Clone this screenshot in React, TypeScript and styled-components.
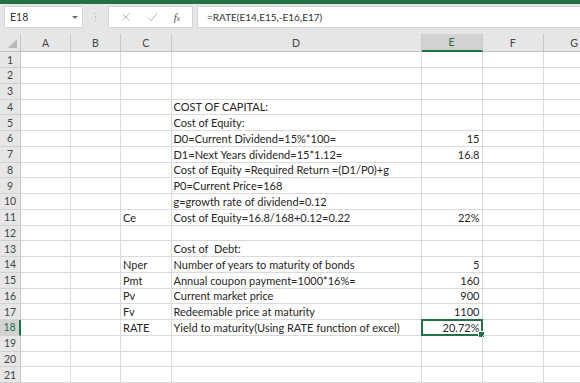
import styled, { createGlobalStyle, css } from 'styled-components';

const GlobalStyle = createGlobalStyle`
  html, body {
    margin: 0;
    padding: 0;
    width: 580px;
    height: 383px;
    overflow: hidden;
    background: #ffffff;
  }
  body {
    font-family: Lato, "Liberation Sans", sans-serif;
  }
`;

const COLS = '21px 50px 50px 50.5px 250px 61px 61.5px 61px';
const ROW_H = 15.75;

const Window = styled.div`
  display: flex;
  flex-direction: column;
  width: 580px;
  height: 383px;
  overflow: hidden;
`;

const TitleStrip = styled.div`
  height: 5px;
  background: #217346;
`;

const FormulaBar = styled.div`
  display: flex;
  align-items: center;
  height: 35px;
  padding: 0 0 0 4px;
  background: #e6e6e6;
  box-sizing: border-box;
`;

const NameBox = styled.div`
  display: flex;
  align-items: center;
  justify-content: space-between;
  width: 79px;
  height: 22px;
  box-sizing: border-box;
  background: #ffffff;
  border: 1px solid #d6d6d6;
  padding: 0 4px 0 5px;
  font-size: 10.5px;
  color: #333;
`;

const Caret = styled.span`
  width: 0;
  height: 0;
  border-left: 3px solid transparent;
  border-right: 3px solid transparent;
  border-top: 3px solid #6a6a6a;
`;

const Grip = styled.div`
  display: flex;
  flex-direction: column;
  gap: 2px;
  width: 25px;
  align-items: center;
  span {
    width: 1.5px;
    height: 1.5px;
    background: #b4b4b4;
  }
`;

const FxBox = styled.div`
  display: flex;
  align-items: center;
  justify-content: space-around;
  width: 85px;
  height: 22px;
  box-sizing: border-box;
  background: #ffffff;
  border: 1px solid #d6d6d6;
  padding: 0 4px;
  margin-right: 4px;
`;

const FxLabel = styled.span`
  font-family: "Liberation Serif", serif;
  font-style: italic;
  font-size: 11px;
  color: #555;
  sub {
    font-size: 7.5px;
    vertical-align: baseline;
  }
`;

const FormulaInput = styled.div`
  flex: 1;
  display: flex;
  align-items: center;
  height: 22px;
  box-sizing: border-box;
  background: #ffffff;
  border: 1px solid #d6d6d6;
  border-right: none;
  padding-left: 9px;
  font-size: 10px;
  color: #333;
`;

const Gap = styled.div`
  height: 5px;
  background: #e6e6e6;
`;

const Sheet = styled.div`
  display: grid;
  grid-template-columns: ${COLS};
  grid-template-rows: 18px repeat(21, ${ROW_H}px);
  font-size: 11px;
  color: #262626;
`;

const Corner = styled.div`
  background: #e6e6e6;
  border-right: 1px solid #c8c8c8;
  border-bottom: 1px solid #c0c0c0;
  box-sizing: border-box;
  position: relative;
  &::after {
    content: '';
    position: absolute;
    right: 3px;
    bottom: 3px;
    width: 0;
    height: 0;
    border-left: 9px solid transparent;
    border-bottom: 9px solid #b9b9b9;
  }
`;

const ColHead = styled.div<{ $active?: boolean }>`
  display: flex;
  align-items: center;
  justify-content: center;
  box-sizing: border-box;
  background: #e6e6e6;
  border-right: 1px solid #c8c8c8;
  border-bottom: 1px solid #c0c0c0;
  font-size: 10.5px;
  color: #444;
  ${(p) =>
    p.$active &&
    css`
      background: #d2d2d2;
      border-bottom: 2px solid #217346;
      color: #217346;
    `}
`;

const RowHead = styled.div<{ $active?: boolean }>`
  display: flex;
  align-items: center;
  justify-content: center;
  box-sizing: border-box;
  background: #e6e6e6;
  border-right: 1px solid #c8c8c8;
  border-bottom: 1px solid #d2d2d2;
  font-size: 10.5px;
  color: #444;
  ${(p) =>
    p.$active &&
    css`
      background: #d2d2d2;
      border-right: 2px solid #217346;
      color: #217346;
    `}
`;

const Cell = styled.div<{ $num?: boolean; $selected?: boolean }>`
  position: relative;
  display: flex;
  align-items: center;
  justify-content: ${(p) => (p.$num ? 'flex-end' : 'flex-start')};
  box-sizing: border-box;
  padding: 0 2px;
  border-right: 1px solid #dadada;
  border-bottom: 1px solid #dadada;
  white-space: pre;
  overflow: visible;
  ${(p) =>
    p.$selected &&
    css`
      border: 2px solid #217346;
      margin: -1px 0 0 -1px;
      padding-right: 1px;
    `}
`;

const FillHandle = styled.span`
  position: absolute;
  right: -4px;
  bottom: -4px;
  width: 5px;
  height: 5px;
  background: #217346;
  border: 1px solid #ffffff;
`;

type Row = { c?: string; d?: string; e?: string };

const rows: Row[] = [
  {},
  {},
  {},
  { d: 'COST OF CAPITAL:' },
  { d: 'Cost of Equity:' },
  { d: 'D0=Current Dividend=15%*100=', e: '15' },
  { d: 'D1=Next Years dividend=15*1.12=', e: '16.8' },
  { d: 'Cost of Equity =Required Return =(D1/P0)+g' },
  { d: 'P0=Current Price=168' },
  { d: 'g=growth rate of dividend=0.12' },
  { c: 'Ce', d: 'Cost of Equity=16.8/168+0.12=0.22', e: '22%' },
  {},
  { d: 'Cost of  Debt:' },
  { c: 'Nper', d: 'Number of years to maturity of bonds', e: '5' },
  { c: 'Pmt', d: 'Annual coupon payment=1000*16%=', e: '160' },
  { c: 'Pv', d: 'Current market price', e: '900' },
  { c: 'Fv', d: 'Redeemable price at maturity', e: '1100' },
  { c: 'RATE', d: 'Yield to maturity(Using RATE function of excel)', e: '20.72%' },
  {},
  {},
  {},
];

const columns = ['A', 'B', 'C', 'D', 'E', 'F', 'G'];

const App = () => {
  return (
    <Window>
      <GlobalStyle />
      <TitleStrip />
      <FormulaBar>
        <NameBox>
          <span>E18</span>
          <Caret />
        </NameBox>
        <Grip>
          <span />
          <span />
          <span />
        </Grip>
        <FxBox>
          <svg width="10" height="10" viewBox="0 0 10 10">
            <path d="M1.5 1.5 L8.5 8.5 M8.5 1.5 L1.5 8.5" stroke="#b5b5b5" strokeWidth="1" fill="none" />
          </svg>
          <svg width="11" height="10" viewBox="0 0 11 10">
            <path d="M1 5.5 L4 8.5 L10 1.5" stroke="#b5b5b5" strokeWidth="1" fill="none" />
          </svg>
          <FxLabel>
            f<sub>x</sub>
          </FxLabel>
        </FxBox>
        <FormulaInput>=RATE(E14,E15,-E16,E17)</FormulaInput>
      </FormulaBar>
      <Gap />
      <Sheet>
        <Corner />
        {columns.map((col) => (
          <ColHead key={col} $active={col === 'E'}>
            {col}
          </ColHead>
        ))}
        {rows.map((row, i) => {
          const n = i + 1;
          const sel = n === 18;
          return [
            <RowHead key={`h${n}`} $active={sel}>
              {n}
            </RowHead>,
            <Cell key={`a${n}`} />,
            <Cell key={`b${n}`} />,
            <Cell key={`c${n}`}>{row.c}</Cell>,
            <Cell key={`d${n}`}>{row.d}</Cell>,
            <Cell key={`e${n}`} $num $selected={sel}>
              {row.e}
              {sel && <FillHandle />}
            </Cell>,
            <Cell key={`f${n}`} />,
            <Cell key={`g${n}`} />,
          ];
        })}
      </Sheet>
    </Window>
  );
};

export default App;
